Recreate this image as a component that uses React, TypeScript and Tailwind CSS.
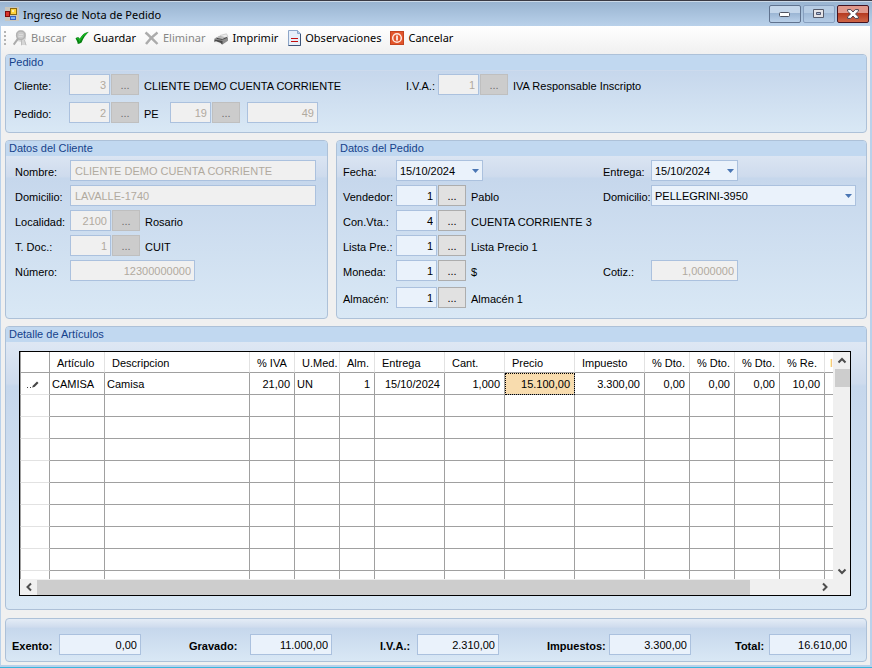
import { useId, type ReactNode } from "react";
import clsx from "clsx";

const PANEL_BG =
  "bg-[linear-gradient(180deg,#e4ecf6_0%,#cedbed_20%,#c6d7ec_21%,#d9e8f5_100%)]";

const COLUMNS = [
  { title: "Artículo", width: "w-[55px]", value: "CAMISA" },
  { title: "Descripcion", width: "w-[145px]", value: "Camisa" },
  { title: "% IVA", width: "w-[45px]", value: "21,00", right: true },
  { title: "U.Med.", width: "w-[45px]", value: "UN" },
  { title: "Alm.", width: "w-[35px]", value: "1", right: true },
  { title: "Entrega", width: "w-[70px]", value: "15/10/2024", right: true },
  { title: "Cant.", width: "w-[60px]", value: "1,000", right: true },
  { title: "Precio", width: "w-[70px]", value: "15.100,00", right: true, active: true },
  { title: "Impuesto", width: "w-[70px]", value: "3.300,00", right: true },
  { title: "% Dto.", width: "w-[45px]", value: "0,00", right: true },
  { title: "% Dto.", width: "w-[45px]", value: "0,00", right: true },
  { title: "% Dto.", width: "w-[45px]", value: "0,00", right: true },
  { title: "% Re.", width: "w-[45px]", value: "10,00", right: true },
];

const TOTALS = [
  { label: "Exento:", width: "w-[47px]", margin: "mr-12", value: "0,00" },
  { label: "Gravado:", width: "w-[61px]", margin: "mr-12", value: "11.000,00" },
  { label: "I.V.A.:", width: "w-[37px]", margin: "mr-12", value: "2.310,00" },
  { label: "Impuestos:", width: "w-[62px]", margin: "mr-auto", value: "3.300,00" },
  { label: "Total:", width: "w-[34px]", value: "16.610,00" },
];

function AppIcon() {
  return (
    <svg width="14" height="14" viewBox="0 0 14 14" shapeRendering="crispEdges">
      <rect width="14" height="14" fill="#c9c6bd" />
      <rect x="0" y="4" width="5" height="6" fill="#7d0c0c" />
      <rect x="1" y="5" width="3" height="4" fill="#d9342b" />
      <rect x="5" y="1" width="7" height="7" fill="#8a6a10" />
      <rect x="6" y="2" width="5" height="5" fill="#ffd23c" />
      <rect x="7" y="3" width="2" height="2" fill="#fff0a8" />
      <rect x="5" y="9" width="6" height="4" fill="#3563c4" />
      <rect x="6" y="10" width="4" height="2" fill="#7fb0f5" />
    </svg>
  );
}

function SearchIcon() {
  return (
    <svg width="16" height="16" viewBox="0 0 16 16" fill="none">
      <path d="M4 3 6.500.5h5L14 3v6l-1.500 1.500 2 4.500h-5l-.5-3-4-1z" fill="#d6d6d6" />
      <circle cx="8.800" cy="5.200" r="4.200" fill="#c9c9c9" stroke="#b2b2b2" strokeWidth="1.500" />
      <path d="M7 4.500h4M6.500 6.500h4" stroke="#dadada" />
      <path d="m6 8.700-4.300 6" stroke="#ababab" strokeWidth="2" />
      <path d="M9.500 10v5.300M12.500 10l1.500 5.300" stroke="#bdbdbd" />
    </svg>
  );
}

function CheckIcon() {
  return (
    <svg width="16" height="16" viewBox="0 0 16 16">
      <path
        d="M1.500 8.500C3 6.800 4.600 6.500 5.700 8.700 8 5 10.500 2.600 14.800 1.800 11.500 5 9.500 8 7.600 12.500c-1.200.8-2.300 1.300-3.800 1.500C3.500 11.900 2.500 10 1.500 8.500z"
        fill="#078210"
      />
      <path d="M3 8.700c1.200-.5 1.900.3 2.500 2C7.500 7 9.800 4.500 12.500 3" fill="none" stroke="#17b824" strokeWidth="1.200" />
    </svg>
  );
}

function CrossIcon() {
  return (
    <svg width="16" height="16" viewBox="0 0 16 16">
      <path
        d="M1.500 2.500C5 5.500 9.500 10 13.500 14M13.500 2.500C9.500 5.500 5 10 2 14"
        fill="none"
        stroke="#ababab"
        strokeWidth="2.400"
      />
    </svg>
  );
}

function PrinterIcon() {
  return (
    <svg width="16" height="16" viewBox="0 0 16 16">
      <path d="m7 5.500 6.500-1.700 1.500 3-6 2z" fill="#ececec" stroke="#b5b5b5" strokeWidth=".6" />
      <path d="m1.500 8.500 4.500-2.300 9 1.300v3.300l-5.500 3.700-8-2.500z" fill="#8e8e8e" />
      <path d="m2 8.300 4-2 8.500 1.200-5 2.500z" fill="#bcbcbc" />
      <path d="m1.500 9.500 8 1.500v3.200l-8-2z" fill="#4a4a4a" />
      <path d="m.5 12.300 2.500-1 5.500 1.900-2.500 1.700z" fill="#f1f1f1" />
      <path d="m3.500 8.300 5.800 1.200 4.700-2" fill="none" stroke="#3a3a3a" strokeWidth=".9" />
    </svg>
  );
}

function DocumentIcon() {
  return (
    <svg width="16" height="16" viewBox="0 0 16 16">
      <path d="M2.500.5h9l3 3v12h-12z" fill="#e6eef9" stroke="#8da6c8" />
      <path d="M11.500.5v3h3" fill="#b9cce6" stroke="#8da6c8" />
      <path d="M14.500 4v11.500h-12" fill="none" stroke="#3d5478" />
      <path d="M5 8.500h7M5 11.500h7" stroke="#c40d0d" />
    </svg>
  );
}

function CancelIcon() {
  return (
    <svg width="16" height="16" viewBox="0 0 16 16">
      <rect x="1.500" y="1.500" width="13" height="13" fill="#e2552b" stroke="#c34420" />
      <circle cx="8" cy="8" r="4.300" fill="none" stroke="#ffe9e0" strokeWidth="1.500" />
      <path d="M8 5.500v5" stroke="#fff" strokeWidth="1.600" />
    </svg>
  );
}

function Arrow({ d }: { d: string }) {
  return (
    <svg width="10" height="10" viewBox="0 0 10 10" fill="none" stroke="#4d4d4d" strokeWidth="2">
      <path d={d} />
    </svg>
  );
}

function ToolButton({ icon, text, disabled }: { icon: ReactNode; text: string; disabled?: boolean }) {
  return (
    <button
      type="button"
      disabled={disabled}
      className={clsx("flex items-center gap-[3px] whitespace-nowrap", disabled ? "text-[#868686]" : "text-black")}
    >
      {icon}
      {text}
    </button>
  );
}

function Panel({ title, className, children }: { title?: string; className?: string; children: ReactNode }) {
  return (
    <section className={clsx("overflow-hidden rounded-[4px] border border-[#adc1d8]", PANEL_BG, className)}>
      {title && (
        <h2 className="-mx-px -mt-px h-4 bg-[#c1d8f0] px-1 leading-4 text-[#15428b]">{title}</h2>
      )}
      {children}
    </section>
  );
}

function TextBox({
  id,
  label,
  value,
  width,
  disabled,
  left,
}: {
  id?: string;
  label?: string;
  value: string;
  width: string;
  disabled?: boolean;
  left?: boolean;
}) {
  return (
    <input
      id={id}
      aria-label={label}
      type="text"
      defaultValue={value}
      disabled={disabled}
      className={clsx(
        "h-[21px] shrink-0 border border-[#abc1de]",
        width,
        left ? "px-1 text-left" : "px-[3px] text-right",
        disabled ? "bg-[#f0f0f0] text-[#b0aa9f]" : "bg-[#eaf2fb] text-black",
      )}
    />
  );
}

function LookupButton({ label, disabled }: { label: string; disabled?: boolean }) {
  return (
    <button
      type="button"
      aria-label={label}
      disabled={disabled}
      className={clsx(
        "ml-px h-[21px] w-7 shrink-0 border",
        disabled ? "border-[#bfbfbf] bg-[#cccccc] text-[#6d6d6d]" : "border-[#adadad] bg-[#e1e1e1] text-black",
      )}
    >
      ...
    </button>
  );
}

function Lookup({
  label,
  value,
  text,
  disabled,
  labelWidth,
  textWidth,
}: {
  label: string;
  value: string;
  text: string;
  disabled?: boolean;
  labelWidth: string;
  textWidth?: string;
}) {
  const id = useId();
  return (
    <div className="flex items-center whitespace-nowrap">
      <label htmlFor={id} className={clsx("shrink-0 pt-0.5", labelWidth)}>
        {label}
      </label>
      <TextBox id={id} value={value} width="w-[41px]" disabled={disabled} />
      <LookupButton label={`Buscar ${label}`} disabled={disabled} />
      <span className={clsx("pt-0.5 pl-[5px]", textWidth)}>{text}</span>
    </div>
  );
}

function Field({
  label,
  value,
  width,
  labelWidth,
  left,
}: {
  label: string;
  value: string;
  width: string;
  labelWidth: string;
  left?: boolean;
}) {
  const id = useId();
  return (
    <div className="flex items-center">
      <label htmlFor={id} className={clsx("shrink-0 pt-0.5", labelWidth)}>
        {label}
      </label>
      <TextBox id={id} value={value} width={width} left={left} disabled />
    </div>
  );
}

function Dropdown({
  label,
  value,
  width,
  labelWidth,
}: {
  label: string;
  value: string;
  width: string;
  labelWidth: string;
}) {
  const id = useId();
  return (
    <div className="flex items-center">
      <label htmlFor={id} className={clsx("shrink-0 pt-0.5", labelWidth)}>
        {label}
      </label>
      <div className={clsx("relative", width)}>
        <select
          id={id}
          className="block h-[21px] w-full appearance-none border border-[#abc1de] bg-[#eaf2fb] px-[3px] text-black"
        >
          <option>{value}</option>
        </select>
        <svg width="7" height="4" viewBox="0 0 7 4" className="pointer-events-none absolute top-[9px] right-1">
          <path d="M0 0h7L3.500 4z" fill="#4a76b4" />
        </svg>
      </div>
    </div>
  );
}

function TitleBar() {
  const box = "flex h-[18px] w-8 items-center justify-center rounded-[2px] border";
  return (
    <header className="flex h-[26px] items-center border-t border-[#3a3a44] bg-[linear-gradient(180deg,#ffffff_0px,#99b4d1_1px,#b9d1ea_100%)] pr-[3px] pl-[5px]">
      <AppIcon />
      <h1 className="ml-1 flex-1 pt-0.5 font-['Noto_Sans',sans-serif] text-[11px] leading-4">
        Ingreso de Nota de Pedido
      </h1>
      <div className="flex gap-0.5">
        <button
          type="button"
          aria-label="Minimizar"
          className={clsx(box, "border-[#60738f] bg-[linear-gradient(180deg,#c4d6ea_45%,#9cb6d4_46%,#b9d0e9_100%)]")}
        >
          <svg width="12" height="6" viewBox="0 0 12 6">
            <rect x=".5" y="1.500" width="10" height="4" rx="1" fill="#fff" stroke="#4f5360" />
          </svg>
        </button>
        <button
          type="button"
          aria-label="Restaurar"
          className={clsx(box, "border-[#879fbf] bg-[linear-gradient(180deg,#b6cce4_45%,#9fb9d7_46%,#b4cce6_100%)]")}
        >
          <svg width="12" height="10" viewBox="0 0 12 10">
            <path d="M.5.5h10v8H.5z" fill="#e4e4e8" stroke="#565b6b" />
            <path d="M3.500 3.500h4v2h-4z" fill="#a9bfd9" stroke="#4f5570" />
          </svg>
        </button>
        <button
          type="button"
          aria-label="Cerrar"
          className={clsx(box, "border-[#431321] bg-[linear-gradient(180deg,#e0978a_45%,#b53a20_46%,#cf6647_100%)]")}
        >
          <svg width="12" height="10" viewBox="0 0 12 10">
            <path
              d="M.6.600h3.200L6 3 8.200.6h3.200v1.600L8.500 5l2.900 2.800v1.600H8.200L6 7 3.800 9.400H.6V7.800L3.500 5 .6 2.200z"
              fill="#fff"
              stroke="#4a4250"
            />
          </svg>
        </button>
      </div>
    </header>
  );
}

function Toolbar() {
  return (
    <nav className="flex h-7 items-center gap-2 bg-linear-to-b from-white to-[#f0f0f0] pb-1 pl-[3px] font-['Noto_Sans',sans-serif] text-[11px]">
      <svg width="2" height="16" viewBox="0 0 2 16" className="-mr-0.5" fill="#b4b4b4">
        <path d="M0 1h2v2H0zM0 5h2v2H0zM0 9h2v2H0zM0 13h2v2H0z" />
      </svg>
      <ToolButton icon={<SearchIcon />} text="Buscar" disabled />
      <ToolButton icon={<CheckIcon />} text="Guardar" />
      <ToolButton icon={<CrossIcon />} text="Eliminar" disabled />
      <ToolButton icon={<PrinterIcon />} text="Imprimir" />
      <ToolButton icon={<DocumentIcon />} text="Observaciones" />
      <ToolButton icon={<CancelIcon />} text="Cancelar" />
    </nav>
  );
}

function ArticlesGrid() {
  const line = "border-r border-b border-[#a0a0a0]";
  return (
    <div className="mt-[9px] mr-[15px] mb-[13px] ml-[13px] border border-black bg-[#f0f0f0]">
      <div className="flex">
        <div className="h-[227px] min-w-0 flex-1 overflow-hidden bg-white">
          <table className="w-[875px] table-fixed border-separate border-spacing-0 whitespace-nowrap">
            <thead>
              <tr className="h-[21px]">
                <th className="w-[30px] border-r border-b border-l border-[#a0a0a0]" aria-label="Fila" />
                {COLUMNS.map((col, i) => (
                  <th
                    key={i}
                    className={clsx(
                      "border-r border-b border-r-[#e2e2e2] border-b-[#a0a0a0] p-0 pt-0.5 pl-[7px] text-left font-normal",
                      col.width,
                    )}
                  >
                    {col.title}
                  </th>
                ))}
                <th className="w-[70px] border-b border-[#a0a0a0] p-0 pt-0.5 pl-[5px] text-left font-normal text-[#f5c04a]">
                  I
                </th>
              </tr>
            </thead>
            <tbody>
              <tr className="h-[22px]">
                <td className="border-r border-b border-l border-r-[#a0a0a0] border-b-[#e2e2e2] border-l-[#a0a0a0] p-0">
                  <svg width="16" height="10" viewBox="0 0 16 10" className="ml-1">
                    <path d="M2 8.500h1M5 8.500h1" stroke="#444" />
                    <path d="m7 8.500 1-2 4-4 1.500 1.500-4 4z" fill="#444" />
                  </svg>
                </td>
                {COLUMNS.map((col, i) => (
                  <td
                    key={i}
                    className={clsx(
                      "p-0",
                      line,
                      col.right ? "pr-1 text-right" : "pl-0.5",
                      col.active && "bg-[#f8dcae] outline-1 -outline-offset-1 outline-black outline-dotted",
                    )}
                  >
                    {col.value}
                  </td>
                ))}
                <td className={line} />
              </tr>
              {Array.from({ length: 9 }, (_, row) => (
                <tr key={row} className="h-[22px]">
                  <td className="border-r border-b border-l border-r-[#a0a0a0] border-b-[#e2e2e2] border-l-[#a0a0a0] p-0" />
                  {COLUMNS.map((_, i) => (
                    <td key={i} className={line} />
                  ))}
                  <td className={line} />
                </tr>
              ))}
            </tbody>
          </table>
        </div>
        <div className="flex w-[17px] flex-col items-center pl-px">
          <div className="flex h-[17px] items-center">
            <Arrow d="M1.500 6.500 5 3l3.500 3.500" />
          </div>
          <div className="h-[18px] w-[15px] bg-[#cdcdcd]" />
          <div className="mt-auto flex h-[17px] items-center">
            <Arrow d="M1.500 3.500 5 7l3.500-3.500" />
          </div>
        </div>
      </div>
      <div className="flex h-4 items-center pr-[17px]">
        <div className="flex w-[17px] justify-center">
          <Arrow d="M7 1.500 3.500 5 7 8.500" />
        </div>
        <div className="flex flex-1">
          <div className="h-[15px] w-[91.5%] bg-[#cdcdcd]" />
        </div>
        <div className="flex w-[17px] justify-center">
          <Arrow d="M3 1.500 6.500 5 3 8.500" />
        </div>
      </div>
    </div>
  );
}

function TotalsBar() {
  const id = useId();
  return (
    <Panel className="mt-2 flex pt-[15px] pr-[15px] pb-1.5 pl-1.5">
      {TOTALS.map((total, i) => (
        <div key={total.label} className={clsx("flex items-center", total.margin)}>
          <label htmlFor={`${id}-${i}`} className={clsx("pt-0.5 font-bold whitespace-nowrap", total.width)}>
            {total.label}
          </label>
          <TextBox id={`${id}-${i}`} value={total.value} width="w-[82px]" />
        </div>
      ))}
    </Panel>
  );
}

export default function App() {
  return (
    <div className="border-b border-[#3bb5dc] bg-[#f0f0f0] font-['Liberation_Sans',Arial,sans-serif] text-[11px] leading-4 text-black">
      <TitleBar />
      <div className="border-r-2 border-b-2 border-l border-[#b9d1ea]">
        <Toolbar />
        <main className="pr-[3px] pb-[3px] pl-1">
          <Panel title="Pedido" className="pb-[9px]">
            <div className="flex flex-col gap-[7px] pt-1 pl-2">
              <div className="flex">
                <Lookup
                  label="Cliente:"
                  value="3"
                  text="CLIENTE DEMO CUENTA CORRIENTE"
                  labelWidth="w-[55px]"
                  textWidth="w-[267px]"
                  disabled
                />
                <Lookup label="I.V.A.:" value="1" text="IVA Responsable Inscripto" labelWidth="w-8" disabled />
              </div>
              <div className="flex">
                <Lookup label="Pedido:" value="2" text="" labelWidth="w-[55px]" disabled />
                <Lookup label="PE" value="19" text="" labelWidth="w-[26px]" disabled />
                <div className="pl-0.5">
                  <TextBox label="Número de pedido" value="49" width="w-[71px]" disabled />
                </div>
              </div>
            </div>
          </Panel>

          <div className="mt-[7px] flex gap-2">
            <Panel title="Datos del Cliente" className="w-[323px] shrink-0">
              <div className="flex flex-col gap-1 pt-1 pl-[9px]">
                <Field label="Nombre:" value="CLIENTE DEMO CUENTA CORRIENTE" width="w-[246px]" labelWidth="w-[55px]" left />
                <Field label="Domicilio:" value="LAVALLE-1740" width="w-[246px]" labelWidth="w-[55px]" left />
                <Lookup label="Localidad:" value="2100" text="Rosario" labelWidth="w-[55px]" disabled />
                <Lookup label="T. Doc.:" value="1" text="CUIT" labelWidth="w-[55px]" disabled />
                <Field label="Número:" value="12300000000" width="w-[125px]" labelWidth="w-[55px]" />
              </div>
            </Panel>

            <Panel title="Datos del Pedido" className="min-w-0 flex-1 pb-2.5">
              <div className="flex justify-between pt-1 pr-2.5 pl-1.5">
                <div className="flex flex-col gap-1">
                  <Dropdown label="Fecha:" value="15/10/2024" width="w-[87px]" labelWidth="w-[53px]" />
                  <Lookup label="Vendedor:" value="1" text="Pablo" labelWidth="w-[53px]" />
                  <Lookup label="Con.Vta.:" value="4" text="CUENTA CORRIENTE 3" labelWidth="w-[53px]" />
                  <Lookup label="Lista Pre.:" value="1" text="Lista Precio 1" labelWidth="w-[53px]" />
                  <Lookup label="Moneda:" value="1" text="$" labelWidth="w-[53px]" />
                  <div className="pt-0.5">
                    <Lookup label="Almacén:" value="1" text="Almacén 1" labelWidth="w-[53px]" />
                  </div>
                </div>
                <div className="flex flex-col gap-1">
                  <Dropdown label="Entrega:" value="15/10/2024" width="w-[87px]" labelWidth="w-12" />
                  <Dropdown label="Domicilio:" value="PELLEGRINI-3950" width="w-[205px]" labelWidth="w-12" />
                  <div className="pt-[50px]">
                    <Field label="Cotiz.:" value="1,0000000" width="w-[87px]" labelWidth="w-12" />
                  </div>
                </div>
              </div>
            </Panel>
          </div>

          <Panel title="Detalle de Artículos" className="mt-[7px]">
            <ArticlesGrid />
          </Panel>

          <TotalsBar />
        </main>
      </div>
    </div>
  );
}
